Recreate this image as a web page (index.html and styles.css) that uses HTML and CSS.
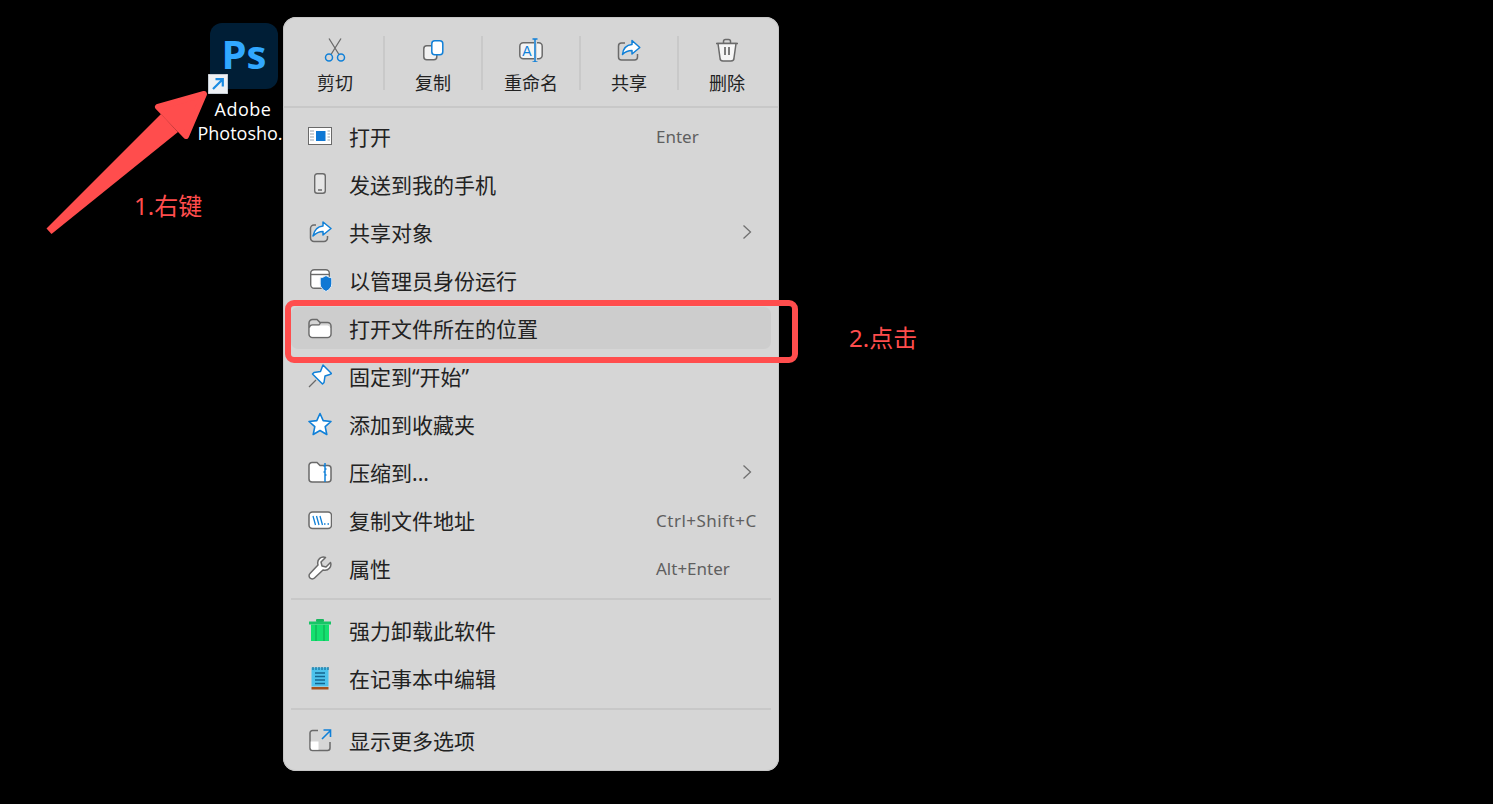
FILE: index.html
```html
<!DOCTYPE html>
<html lang="zh-CN">
<head>
  <meta charset="UTF-8" />
  <title>右键菜单</title>
  <link rel="stylesheet" href="styles.css">
</head>
<body>

  <!-- Desktop shortcut -->
  <div class="shortcut-icon">
    <div class="ps-logo">Ps</div>
    <svg class="shortcut-badge" viewBox="0 0 20 20">
      <rect width="20" height="20" rx="1" fill="#eef1f5"/>
      <rect x="0.5" y="0.5" width="19" height="19" rx="1" fill="none" stroke="#c4ccd4"/>
      <path d="M5 15 14 6M7.5 5.2H14.8V12.5" fill="none" stroke="#1b8ce3" stroke-width="2.2"/>
    </svg>
    <div class="shortcut-name">
      <span class="name-line name-wide">Adobe</span>
      <span class="name-line name-cut">Photosho.</span>
    </div>
  </div>

  <!-- Annotations -->
  <svg class="arrow" viewBox="0 0 170 150">
    <path d="M1.500 140.500 116 26 133 44 6.500 146Z" fill="#ff4d4d"/>
    <path d="M113 19 159 6 141 48Z" fill="#ff4d4d" stroke="#ff4d4d" stroke-width="6" stroke-linejoin="round"/>
  </svg>
  <div class="note note-right">1.右键</div>
  <div class="note note-click">2.点击</div>
  <div class="click-box"></div>

  <!-- Context menu -->
  <div class="menu">
    <div class="toolbar">
      <div class="tool">
        <svg viewBox="0 0 24 24"><path d="M8 16.500 18 0.500M16 16.500 6 0.500" fill="none" stroke="#6a6a6a" stroke-width="1.300"/><circle cx="6" cy="19.500" r="3.500" fill="none" stroke="#1080d8" stroke-width="1.500"/><circle cx="18" cy="19.500" r="3.500" fill="none" stroke="#1080d8" stroke-width="1.500"/></svg>
        <span>剪切</span>
      </div>
      <div class="tool">
        <svg viewBox="0 0 24 24"><rect x="2.800" y="7.800" width="13" height="14" rx="3" fill="#f2f2f2" stroke="#6a6a6a" stroke-width="1.500"/><rect x="10.800" y="2.800" width="11" height="14" rx="3" fill="#fff" stroke="#1080d8" stroke-width="1.500"/></svg>
        <span>复制</span>
      </div>
      <div class="tool">
        <svg viewBox="0 0 24 24"><rect x="0.800" y="4.800" width="22.400" height="16" rx="3.500" fill="#f4f4f4" stroke="#6a6a6a" stroke-width="1.500"/><rect x="15" y="4" width="3" height="18" fill="#d6d6d6"/><text x="8" y="17.500" class="glyph-a">A</text><path d="M16 1V24M13.500 1H18.500M13.500 24H18.500" fill="none" stroke="#1080d8" stroke-width="1.500"/></svg>
        <span>重命名</span>
      </div>
      <div class="tool">
        <svg viewBox="0 0 24 24"><path d="M8 5H4.500A3 3 0 0 0 1.500 8V19A3 3 0 0 0 4.500 22H17.500A3 3 0 0 0 20.500 19V16" fill="none" stroke="#6a6a6a" stroke-width="1.500"/><path d="M15 2.500 22.800 9.500 15 16V12.500C11 12.500 8.500 13.500 5.500 16.500 6 11.500 9 7 15 6.500Z" fill="#fff" stroke="#1080d8" stroke-width="1.500" stroke-linejoin="round"/></svg>
        <span>共享</span>
      </div>
      <div class="tool">
        <svg viewBox="0 0 24 24"><path d="M1 5.500H23" stroke="#6a6a6a" stroke-width="1.500"/><path d="M8.500 5.500V3.500A2 2 0 0 1 10.500 1.500H13.500A2 2 0 0 1 15.500 3.500V5.500" fill="none" stroke="#6a6a6a" stroke-width="1.500"/><path d="M3 5.500 5 20A3 3 0 0 0 8 23H16A3 3 0 0 0 19 20L21 5.500Z" fill="#f6f6f6" stroke="#6a6a6a" stroke-width="1.500"/><path d="M10 9V17M14 9V17" stroke="#555" stroke-width="1.500"/></svg>
        <span>删除</span>
      </div>
    </div>

    <div class="group">
      <div class="row">
        <svg viewBox="0 0 24 24"><rect x="0.500" y="3.500" width="23" height="17" fill="#fff" stroke="#6a6a6a"/><rect x="8" y="7" width="9.500" height="10" fill="#0f78d4"/><path d="M2 7H6M2 10H6M2 13H6M2 16H6M19.500 7H22M19.500 10H22M19.500 13H22M19.500 16H22" stroke="#9aa5ad"/></svg>
        <span class="label">打开</span>
        <span class="keys">Enter</span>
      </div>
      <div class="row">
        <svg viewBox="0 0 24 24"><rect x="6.700" y="1.700" width="10.600" height="19.600" rx="2.500" fill="#e6e6e6" stroke="#6a6a6a" stroke-width="1.400"/><path d="M10 18H14" stroke="#555" stroke-width="1.300"/></svg>
        <span class="label">发送到我的手机</span>
      </div>
      <div class="row">
        <svg viewBox="0 0 24 24"><path d="M8 5H6A3.500 3.500 0 0 0 2.500 8.500V18A3.500 3.500 0 0 0 6 21.500H16A3.500 3.500 0 0 0 19.500 18V16" fill="none" stroke="#6a6a6a" stroke-width="1.500"/><path d="M15 2 23 8.500 15 15V11.500C11 11.500 8 13 5 16 6 11 9 6.500 15 6Z" fill="#fff" stroke="#1080d8" stroke-width="1.500" stroke-linejoin="round"/></svg>
        <span class="label">共享对象</span>
        <span class="keys"><svg class="chevron" viewBox="0 0 10 16"><path d="M1.500 1.500 8.500 8 1.500 14.500" fill="none" stroke="#707070" stroke-width="1.300"/></svg></span>
      </div>
      <div class="row">
        <svg viewBox="0 0 24 24"><rect x="2.700" y="1.700" width="18.600" height="18.600" rx="3.500" fill="#fff" stroke="#6a6a6a" stroke-width="1.400"/><path d="M3 6.500H21" stroke="#6a6a6a" stroke-width="1.400"/><path d="M18 7.500C20 9 21.500 9.500 23.800 9.800V16C23.800 19.500 21 22 18 23.500 15 22 12.200 19.500 12.200 16V9.800C14.500 9.500 16 9 18 7.500Z" fill="#0f78d4" stroke="#e8eef4"/></svg>
        <span class="label">以管理员身份运行</span>
      </div>
      <div class="row active">
        <svg viewBox="0 0 24 24"><path d="M1 7A3.500 3.500 0 0 1 4.500 3.500H9L12 6.500H19.500A3.500 3.500 0 0 1 23 10V18A3.500 3.500 0 0 1 19.500 21.500H4.500A3.500 3.500 0 0 1 1 18Z" fill="#d6d6d6" stroke="#6a6a6a" stroke-width="1.500"/><path d="M1.800 12A3 3 0 0 1 4.800 9.500H19.500A2.800 2.800 0 0 1 22.200 12V18A2.800 2.800 0 0 1 19.500 20.700H4.500A2.800 2.800 0 0 1 1.800 18Z" fill="#fff"/><path d="M1.500 11.500A3 3 0 0 1 4.500 8.800H11L12.500 7" fill="none" stroke="#6a6a6a" stroke-width="1.200"/></svg>
        <span class="label">打开文件所在的位置</span>
      </div>
      <div class="row">
        <svg viewBox="0 0 24 24"><path d="M1 23 8 16" stroke="#6a6a6a" stroke-width="1.300"/><path d="M15 1 23.500 9.500 21 10.800 17 12 16 18.500 14.500 20 4.500 10 6 8.500 12.500 7.500 14 3.500Z" fill="#fff" stroke="#1080d8" stroke-width="1.500" stroke-linejoin="round"/></svg>
        <span class="label">固定到“开始”</span>
      </div>
      <div class="row">
        <svg viewBox="0 0 24 24"><path d="M12 1.500 15.200 8.600 23 9.500 17.200 14.700 18.800 22.500 12 18.500 5.200 22.500 6.800 14.700 1 9.500 8.800 8.600Z" fill="#fff" stroke="#1080d8" stroke-width="1.600" stroke-linejoin="round"/></svg>
        <span class="label">添加到收藏夹</span>
      </div>
      <div class="row">
        <svg viewBox="0 0 24 24"><path d="M1 5.500A3 3 0 0 1 4 2.500H9L12 5.500H20A3 3 0 0 1 23 8.500V19A3 3 0 0 1 20 22H4A3 3 0 0 1 1 19Z" fill="#fff" stroke="#6a6a6a" stroke-width="1.500"/><path d="M17 3V22" stroke="#1080d8" stroke-width="1.500"/><path d="M15.500 6H17M17 9H18.500M15.500 12H17M17 15H18.500" stroke="#1080d8" stroke-width="1.500"/></svg>
        <span class="label">压缩到...</span>
        <span class="keys"><svg class="chevron" viewBox="0 0 10 16"><path d="M1.500 1.500 8.500 8 1.500 14.500" fill="none" stroke="#707070" stroke-width="1.300"/></svg></span>
      </div>
      <div class="row">
        <svg viewBox="0 0 24 24"><rect x="1" y="4" width="22.500" height="16.500" rx="3.500" fill="#fff" stroke="#6a6a6a" stroke-width="1.500"/><path d="M5 8 7.500 17M8.500 8 11 17M12 8 14.500 17" stroke="#1080d8" stroke-width="1.300"/><path d="M16 16H17.500M19.500 16H21" stroke="#1080d8" stroke-width="1.500"/></svg>
        <span class="label">复制文件地址</span>
        <span class="keys keys-wide">Ctrl+Shift+C</span>
      </div>
      <div class="row">
        <svg viewBox="0 0 24 24"><path d="M22.500 6.500 18 11 14 10 13 6 17.500 1.500C13.500 0 8.500 3 10 9L2 17.500A3 3 0 0 0 6.500 22L15 14C20.500 15.500 24 10.500 22.500 6.500Z" fill="#fff" stroke="#6a6a6a" stroke-width="1.500" stroke-linejoin="round"/></svg>
        <span class="label">属性</span>
        <span class="keys">Alt+Enter</span>
      </div>
    </div>

    <div class="line"></div>

    <div class="group">
      <div class="row">
        <svg viewBox="0 0 24 24"><rect x="8" y="1" width="8" height="3" rx="1" fill="#17b85e"/><rect x="1" y="3.500" width="22" height="3" fill="#17c566"/><path d="M3 6.500H21V23H3Z" fill="#14e06f"/><path d="M8 7V23M16 7V23" stroke="#10b85a" stroke-width="1.500"/></svg>
        <span class="label">强力卸载此软件</span>
      </div>
      <div class="row">
        <svg viewBox="0 0 24 24"><rect x="3.500" y="1.500" width="17" height="19" fill="#4cc2ec"/><path d="M5 1V4M8 1V4M11 1V4M14 1V4M17 1V4M20 1V4" stroke="#1a6f9a" stroke-width="1.200"/><path d="M7 7H17M7 10.500H17M7 14H17M7 17.500H17" stroke="#14658f" stroke-width="1.600"/><rect x="3.500" y="21" width="17" height="2.500" fill="#a5501c"/></svg>
        <span class="label">在记事本中编辑</span>
      </div>
    </div>

    <div class="line"></div>

    <div class="group">
      <div class="row">
        <svg viewBox="0 0 24 24"><path d="M10 2.500H4.500A2.500 2.500 0 0 0 2 5V20A2.500 2.500 0 0 0 4.500 22.500H19.500A2.500 2.500 0 0 0 22 20V14" fill="none" stroke="#6a6a6a" stroke-width="1.500"/><path d="M2.700 13.500H10.500V21.800H4.500A1.800 1.800 0 0 1 2.700 20Z" fill="#fff"/><path d="M14 11 22 3M15.500 2H22.500V9" fill="none" stroke="#1080d8" stroke-width="1.600"/></svg>
        <span class="label">显示更多选项</span>
      </div>
    </div>
  </div>

</body>
</html>
```

FILE: styles.css
```css
* { box-sizing: border-box; margin: 0; padding: 0; }

body {
  width: 1493px;
  height: 804px;
  background-color: #000;
  font-family: "Noto Sans", "Noto Sans CJK SC", sans-serif;
  position: relative;
  overflow: hidden;
}

/* desktop shortcut */
.shortcut-icon {
  position: absolute;
  left: 190px;
  top: 23px;
  width: 106px;
}

.ps-logo {
  width: 68px;
  height: 66px;
  margin-left: 20px;
  background-color: #001e36;
  border-radius: 12px;
  color: #31a8ff;
  font-family: "Open Sans", sans-serif;
  font-size: 40px;
  font-weight: 700;
  line-height: 62px;
  text-align: center;
}

.shortcut-badge {
  position: absolute;
  left: 18px;
  top: 51px;
  width: 20px;
  height: 20px;
}

.shortcut-name {
  margin-top: 8px;
  color: #fff;
  font-family: "Open Sans", sans-serif;
  font-size: 18px;
  line-height: 24px;
  text-align: center;
}

.name-line {
  display: block;
  white-space: nowrap;
}

.name-wide { letter-spacing: 0.5px; }
.name-cut { margin-right: 6px; }

/* red annotations */
.arrow {
  position: absolute;
  left: 45px;
  top: 88px;
  width: 170px;
  height: 150px;
}

.note {
  position: absolute;
  color: #ff4d4d;
  font-size: 24px;
  line-height: 32px;
}

.note-right { left: 134px; top: 190px; }
.note-click { left: 849px; top: 322px; }

.click-box {
  position: absolute;
  left: 285px;
  top: 300px;
  width: 513px;
  height: 63px;
  border: 6px solid #ff4d4d;
  border-radius: 9px;
  z-index: 2;
}

/* context menu */
.menu {
  position: absolute;
  left: 283px;
  top: 17px;
  width: 496px;
  height: 754px;
  background-color: #d6d6d6;
  border-radius: 13px;
  box-shadow: inset 0 0 0 1px #c6c6c6;
}

.toolbar {
  display: flex;
  height: 91px;
  padding: 19px 0 0 4px;
  border-bottom: 2px solid #c8c8c8;
}

.tool {
  width: 98px;
  height: 54px;
  border-right: 2px solid #c9c9c9;
  display: flex;
  flex-direction: column;
  align-items: center;
}

.tool:last-child { border-right-color: transparent; }

.tool svg {
  width: 24px;
  height: 24px;
  margin-top: 2px;
  flex: none;
}

.tool span {
  margin-top: 8px;
  color: #222;
  font-size: 18px;
  line-height: 27px;
  white-space: nowrap;
}

.glyph-a {
  font-family: "Liberation Sans", sans-serif;
  font-size: 14px;
  fill: #1080d8;
  text-anchor: middle;
}

.group {
  padding: 0 8px;
}

.toolbar + .group { padding-top: 1px; }

.row {
  display: flex;
  align-items: center;
  height: 42px;
  margin: 6px 0;
  padding-left: 17px;
  border-radius: 7px;
  color: #222;
  font-size: 21px;
}

.row svg {
  width: 24px;
  height: 24px;
  flex: none;
}

.row.active { background-color: #cdcdcd; }

.label {
  flex: 1;
  margin-left: 17px;
  white-space: nowrap;
}

.keys {
  width: 115px;
  color: #5f5f5f;
  font-size: 17px;
  white-space: nowrap;
}

.keys-wide { letter-spacing: 0.5px; }

.row svg.chevron {
  display: block;
  width: 10px;
  height: 16px;
  margin-left: 86px;
}

/* row margins collapse into these */
.line {
  height: 2px;
  margin: 9px 8px;
  background-color: #c8c8c8;
}
```
